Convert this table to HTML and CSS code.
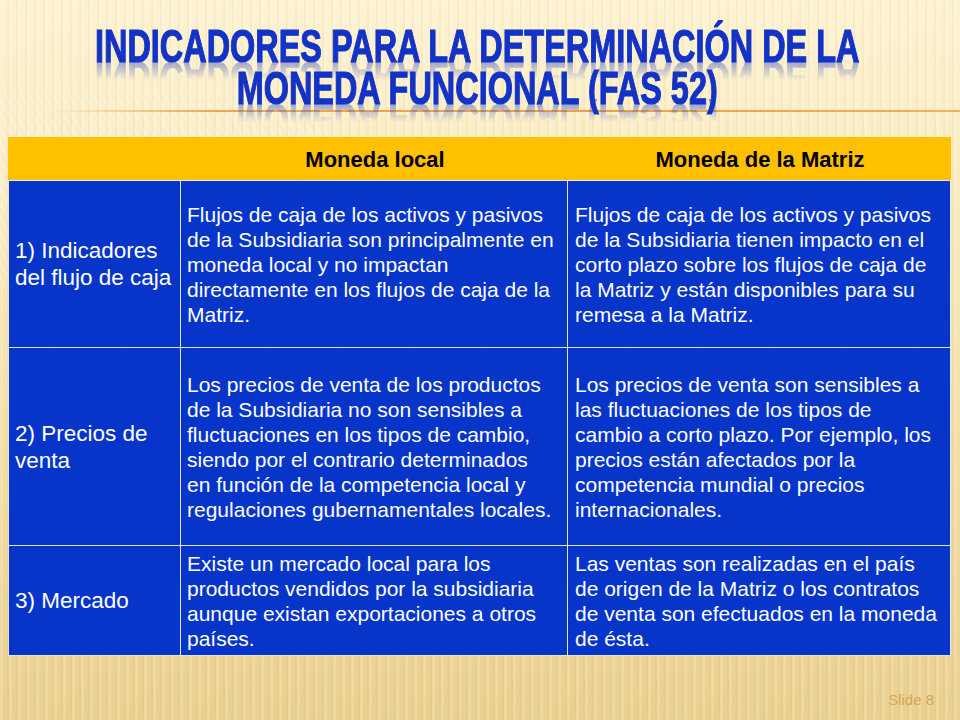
FILE: index.html
```html
<!DOCTYPE html>
<html lang="es">
<head>
<meta charset="utf-8">
<title>Indicadores para la determinación de la moneda funcional</title>
<link rel="stylesheet" href="styles.css">
</head>
<body>
<div class="slide">
  <header class="title">
    <h1>
      <span class="tline">INDICADORES PARA LA DETERMINACIÓN DE LA</span>
      <span class="tline">MONEDA FUNCIONAL (FAS 52)</span>
    </h1>
    <div class="rule"></div>
  </header>

  <table class="grid">
    <colgroup>
      <col class="k1">
      <col class="k2">
      <col class="k3">
    </colgroup>
    <thead>
      <tr class="head">
        <th></th>
        <th>Moneda local</th>
        <th>Moneda de la Matriz</th>
      </tr>
    </thead>
    <tbody>
      <tr class="r1">
        <td class="label">1) Indicadores<br>del flujo de caja</td>
        <td>Flujos de caja de los activos y pasivos<br>de la Subsidiaria son principalmente en<br>moneda local y no impactan<br>directamente en los flujos de caja de la<br>Matriz.</td>
        <td class="c3">Flujos de caja de los activos y pasivos<br>de la Subsidiaria tienen impacto en el<br>corto plazo sobre los flujos de caja de<br>la Matriz y están disponibles para su<br>remesa a la Matriz.</td>
      </tr>
      <tr class="r2">
        <td class="label">2) Precios de<br>venta</td>
        <td>Los precios de venta de los productos<br>de la Subsidiaria no son sensibles a<br>fluctuaciones en los tipos de cambio,<br>siendo por el contrario determinados<br>en función de la competencia local y<br>regulaciones gubernamentales locales.</td>
        <td class="c3">Los precios de venta son sensibles a<br>las fluctuaciones de los tipos de<br>cambio a corto plazo. Por ejemplo, los<br>precios están afectados por la<br>competencia mundial o precios<br>internacionales.</td>
      </tr>
      <tr class="r3">
        <td class="label">3) Mercado</td>
        <td>Existe un mercado local para los<br>productos vendidos por la subsidiaria<br>aunque existan exportaciones a otros<br>países.</td>
        <td class="c3">Las ventas son realizadas en el país<br>de origen de la Matriz o los contratos<br>de venta son efectuados en la moneda<br>de ésta.</td>
      </tr>
    </tbody>
  </table>

  <footer class="foot">Slide 8</footer>
</div>
</body>
</html>
```
FILE: styles.css
```css
html, body {
  margin: 0;
  padding: 0;
}

body {
  width: 960px;
  height: 720px;
  overflow: hidden;
  font-family: "Liberation Sans", Arial, sans-serif;
}

.slide {
  width: 960px;
  height: 720px;
  display: flex;
  flex-direction: column;
  background-color: #f6e2ad;
  background-image:
    repeating-linear-gradient(90deg, rgba(255,255,255,0.16) 0 3px, rgba(255,255,255,0) 3px 7px, rgba(160,120,40,0.05) 7px 9px),
    repeating-linear-gradient(62deg, rgba(255,255,255,0) 0 5px, rgba(255,255,255,0.22) 5px 7px),
    linear-gradient(180deg, #fdf2d2 0%, #fbedc4 20%, #f4e0aa 55%, #ead08f 100%);
  background-size: 100% 100%, 330px 200px, 100% 100%;
  background-position: 0 0, 0 90px, 0 0;
  background-repeat: no-repeat;
}

.title {
  padding-top: 25px;
  height: 113px;
  box-sizing: border-box;
  flex: none;
}

.title h1 {
  margin: 0;
  display: flex;
  flex-direction: column;
  align-items: center;
  font-family: "Liberation Sans Narrow", "Liberation Sans", Arial, sans-serif;
  font-weight: bold;
  font-size: 46px;
  line-height: 42px;
  color: #1333c6;
  white-space: nowrap;
  padding-right: 6px;
}

.tline {
  display: block;
  transform: scaleX(0.705);
  transform-origin: 50% 50%;
  -webkit-text-stroke: 1.2px #1333c6;
  -webkit-box-reflect: below -10px linear-gradient(to bottom, rgba(0,0,0,0) 0%, rgba(0,0,0,0) 45%, rgba(0,0,0,0.5) 100%);
}

.rule {
  height: 2px;
  margin-top: 1px;
  margin-left: 50px;
  background: linear-gradient(90deg, rgba(233,160,70,0) 0%, rgba(233,160,70,0.9) 18%, #e9a24a 60%, #eeb060 100%);
}

.grid {
  margin-top: 24px;
  margin-left: 8px;
  width: 942px;
  border-collapse: collapse;
  table-layout: fixed;
  flex: none;
}

.k1 { width: 172px; }
.k2 { width: 387px; }
.k3 { width: 383px; }

.grid th,
.grid td {
  border: 1px solid rgba(225, 232, 255, 0.85);
  padding: 0 4px 0 6px;
  vertical-align: middle;
  text-align: left;
  white-space: nowrap;
  overflow: hidden;
}

.head th {
  background: #ffc000;
  color: #000;
  font-weight: bold;
  font-size: 22px;
  height: 40px;
  text-align: center;
  padding-top: 2px;
  border-color: #ffc000;
  border-bottom-color: rgba(225, 232, 255, 0.85);
}

.grid td {
  background: #0735c9;
  color: #ffffff;
  font-size: 21px;
  line-height: 25px;
}

.grid td.c3 {
  padding-left: 7px;
}

.grid td.label {
  font-size: 22.5px;
  line-height: 27px;
}

.r1 td { height: 166px; }
.r2 td { height: 197px; }
.r3 td { height: 109px; }

.foot {
  margin-top: auto;
  margin-bottom: 12px;
  align-self: flex-end;
  margin-right: 26px;
  font-size: 15px;
  color: #d9a456;
}
```
